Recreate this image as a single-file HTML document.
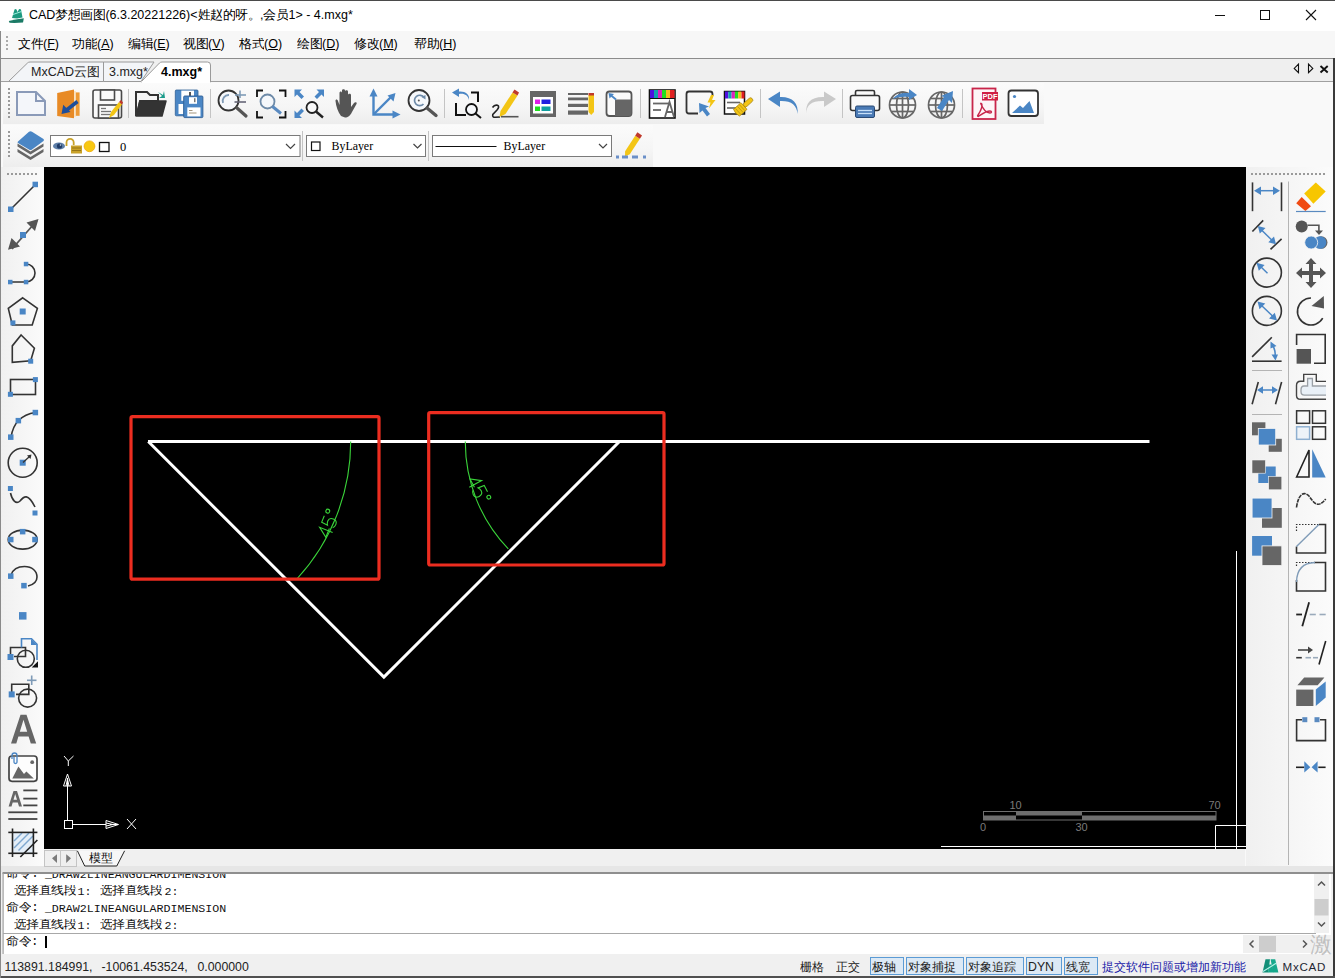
<!DOCTYPE html>
<html><head><meta charset="utf-8">
<style>
*{margin:0;padding:0;box-sizing:border-box}
html,body{width:1335px;height:978px;overflow:hidden;background:#f9f9f9;font-family:"Liberation Sans",sans-serif;color:#000}
.a{position:absolute}
.t{position:absolute;white-space:nowrap;line-height:1}
svg{position:absolute;overflow:visible}
.k{display:inline-block;width:1em;font-style:normal;overflow:hidden;vertical-align:top;text-align:left}
</style></head><body>
<!-- title bar -->
<div class="a" style="left:0;top:0;width:1335px;height:31px;background:#fff"></div>
<div class="t" style="left:29px;top:9px;font-size:12.5px;color:#000">CAD<i class="k">梦</i><i class="k">想</i><i class="k">画</i><i class="k">图</i>(6.3.20221226)&lt;<i class="k">姓</i><i class="k">赵</i><i class="k">的</i><i class="k">呀</i><i class="k">。</i>,<i class="k">会</i><i class="k">员</i>1&gt; - 4.mxg*</div>
<!-- menu bar -->
<div class="a" style="left:0;top:31px;width:1335px;height:27px;background:#f7f7f7"></div>
<div class="t" style="left:18px;top:38px;font-size:12.5px"><i class="k">文</i><i class="k">件</i>(<u>F</u>)</div>
<div class="t" style="left:72px;top:38px;font-size:12.5px"><i class="k">功</i><i class="k">能</i>(<u>A</u>)</div>
<div class="t" style="left:128px;top:38px;font-size:12.5px"><i class="k">编</i><i class="k">辑</i>(<u>E</u>)</div>
<div class="t" style="left:183px;top:38px;font-size:12.5px"><i class="k">视</i><i class="k">图</i>(<u>V</u>)</div>
<div class="t" style="left:239px;top:38px;font-size:12.5px"><i class="k">格</i><i class="k">式</i>(<u>O</u>)</div>
<div class="t" style="left:297px;top:38px;font-size:12.5px"><i class="k">绘</i><i class="k">图</i>(<u>D</u>)</div>
<div class="t" style="left:354px;top:38px;font-size:12.5px"><i class="k">修</i><i class="k">改</i>(<u>M</u>)</div>
<div class="t" style="left:414px;top:38px;font-size:12.5px"><i class="k">帮</i><i class="k">助</i>(<u>H</u>)</div>
<div class="a" style="left:6px;top:36px;width:2px;height:2px;background:#aaa;box-shadow:0 4px 0 #aaa,0 8px 0 #aaa,0 12px 0 #aaa"></div>
<!-- tab bar -->
<div class="a" style="left:0;top:58px;width:1335px;height:24px;background:#efefef;border-top:1px solid #8c8c8c;border-bottom:1px solid #a0a0a0"></div>
<!-- toolbars area -->
<div class="a" style="left:0;top:82px;width:1335px;height:86px;background:#f9f9f9"></div>
<div class="a" style="left:3px;top:83px;width:1041px;height:41px;background:linear-gradient(180deg,#fbfbfb,#f5f5f5 60%,#ededed)"></div>
<div class="a" style="left:3px;top:125px;width:650px;height:42px;background:linear-gradient(180deg,#fbfbfb,#f5f5f5 60%,#ededed)"></div>
<!-- left toolbar -->
<div class="a" style="left:1px;top:167px;width:43px;height:700px;background:linear-gradient(90deg,#f0f0f0,#fbfbfb)"></div>
<!-- canvas -->
<div class="a" style="left:44px;top:167px;width:1202px;height:682px;background:#000"></div>
<!-- right toolbars -->
<div class="a" style="left:1246px;top:167px;width:87px;height:699px;background:linear-gradient(90deg,#f0f0f0,#fbfbfb)"></div>
<!-- model tab row -->
<div class="a" style="left:45px;top:849px;width:1200px;height:19px;background:#efefef"></div>
<!-- command area -->
<div class="a" style="left:0;top:868px;width:1335px;height:86px;background:#f0f0f0"></div>
<div class="a" style="left:3px;top:872px;width:1328px;height:82px;background:#fff;border-top:2px solid #a9a9a9;border-left:1px solid #a0a0a0"></div>
<div class="a" style="left:4px;top:933px;width:1312px;height:1px;background:#a0a0a0"></div>
<!-- status bar -->
<div class="a" style="left:0;top:954px;width:1335px;height:24px;background:#f0f0f0"></div>
<div class="a" style="left:0;top:976px;width:1335px;height:2px;background:#555"></div>
<svg class="a" style="left:0;top:0" width="1335" height="978" viewBox="0 0 1335 978">
<rect x="0" y="0" width="1335" height="1" fill="#4a4a4a"/>
<!-- app icon -->
<path d="M12 18 L14.5 9.5 Q15.5 8.5 16.5 9.5 L17.5 12 L19 9.3 Q20 8.5 21 9.5 L22.5 17.5 L17 18.5 Z" fill="#1d9a80"/>
<path d="M13 14.5 L21.5 11.5" stroke="#9ff0e0" stroke-width="1"/>
<path d="M8.8 21 Q15 19.5 23.8 18.3 L23 22.5 Q16 23.2 9.5 22.8 Z" fill="#1a7a65"/>
<!-- window buttons -->
<line x1="1215" y1="15.5" x2="1225" y2="15.5" stroke="#111" stroke-width="1"/>
<rect x="1260.5" y="10.5" width="9" height="9" fill="none" stroke="#111" stroke-width="1"/>
<path d="M1306 10 L1316 20 M1316 10 L1306 20" stroke="#111" stroke-width="1.1"/>
<!-- tab bar -->
<path d="M8.5 81.5 L27.5 63 Q28.5 62 30 62 H103.5 V81.5 Z" fill="#f3f5f8" stroke="#9a9a9a" stroke-width="1"/>
<path d="M103.5 81.5 V62 H154 L141 81.5 Z" fill="#f3f5f8" stroke="#9a9a9a" stroke-width="1"/>
<path d="M141 82 L159.5 63 Q160.5 62 162 62 H207.5 Q210.5 62 210.5 65 V82 Z" fill="#ffffff" stroke="#9a9a9a" stroke-width="1"/>
<rect x="141.5" y="81" width="68.5" height="2" fill="#fff"/>
<path d="M1298.5 64 V72.7 L1294.2 68.4 Z M1308.5 64 V72.7 L1312.8 68.4 Z" fill="none" stroke="#111" stroke-width="1.1"/>
<path d="M1320.5 66 L1327.7 72.5 M1327.7 66 L1320.5 72.5" stroke="#111" stroke-width="1.9"/>
</svg>
<div class="t" style="left:31px;top:66px;font-size:12.5px;color:#222">MxCAD<i class="k">云</i><i class="k">图</i></div>
<div class="t" style="left:109px;top:66px;font-size:12.5px;color:#222">3.mxg*</div>
<div class="t" style="left:161px;top:66px;font-size:12.5px;font-weight:bold;color:#000">4.mxg*</div>

<svg class="a" style="left:0;top:0" width="1335" height="978" viewBox="0 0 1335 978">
<!-- grips -->
<g fill="#9a9a9a"><rect x="8" y="88" width="2" height="2"/><rect x="8" y="92" width="2" height="2"/><rect x="8" y="96" width="2" height="2"/><rect x="8" y="100" width="2" height="2"/><rect x="8" y="104" width="2" height="2"/><rect x="8" y="108" width="2" height="2"/><rect x="8" y="112" width="2" height="2"/><rect x="8" y="116" width="2" height="2"/>
<rect x="8" y="131" width="2" height="2"/><rect x="8" y="135" width="2" height="2"/><rect x="8" y="139" width="2" height="2"/><rect x="8" y="143" width="2" height="2"/><rect x="8" y="147" width="2" height="2"/><rect x="8" y="151" width="2" height="2"/><rect x="8" y="155" width="2" height="2"/></g>
<!-- separators -->
<g stroke="#c4c4c4" stroke-width="1"><line x1="128.5" y1="89" x2="128.5" y2="118"/><line x1="210.5" y1="89" x2="210.5" y2="118"/><line x1="444.5" y1="89" x2="444.5" y2="118"/><line x1="640.5" y1="89" x2="640.5" y2="118"/><line x1="760.5" y1="89" x2="760.5" y2="118"/><line x1="842.5" y1="89" x2="842.5" y2="118"/><line x1="962.5" y1="89" x2="962.5" y2="118"/><line x1="302.5" y1="131" x2="302.5" y2="161"/><line x1="428.5" y1="131" x2="428.5" y2="161"/></g>
<!-- 1 new -->
<path d="M17 92 H36 L45 101 V115 H17 Z" fill="#f4f6fa" stroke="#8a9ab8" stroke-width="2"/>
<path d="M36 92 V101 H45" fill="none" stroke="#8a9ab8" stroke-width="2"/>
<!-- 2 orange open -->
<path d="M57.2 93 L74 89.4 V118.2 L57.2 116 Z" fill="#e88a25"/>
<rect x="74" y="91" width="1.8" height="26" fill="#fbe2c0"/>
<path d="M75.8 92.4 H79.6 V115.8 H75.8 Z" fill="#ee9a35"/>
<line x1="77.5" y1="101.5" x2="66" y2="110.5" stroke="#1f4e9a" stroke-width="3.6"/>
<path d="M61.5 114 L63.2 104.8 L70.5 112 Z" fill="#1f4e9a"/>
<!-- 3 save -->
<rect x="93" y="90" width="28.5" height="28" rx="2" fill="#fafafa" stroke="#4a4a4a" stroke-width="1.6"/>
<rect x="100.5" y="90" width="14" height="10" fill="#fafafa" stroke="#4a4a4a" stroke-width="1.6"/>
<rect x="98.5" y="105" width="20" height="13" fill="#fafafa" stroke="#4a4a4a" stroke-width="1.6"/>
<g stroke="#777" stroke-width="1.3"><line x1="101" y1="108.5" x2="106" y2="108.5"/><line x1="101" y1="111.5" x2="111" y2="111.5"/><line x1="101" y1="114.5" x2="111" y2="114.5"/></g>
<path d="M109 118 L111 112 L119 102 L122 104.5 L114 115 Z" fill="#f3c515"/>
<path d="M119 102 L121 100 L123 102.5 L122 104.5 Z" fill="#c0392b"/>
<!-- 4 open folder -->
<path d="M136 92 H147 L150 95 H158 V101 H140 L137 115 H136 Z" fill="#f6f6f6" stroke="#333" stroke-width="2"/>
<path d="M136 116 L140 101 H166 L162 116 Z" fill="#333" stroke="#333" stroke-width="1.5" stroke-linejoin="round"/>
<path d="M158 92 L163 95 L164 91 L165 98 L159 98 L162 96 Z" fill="#1a9a8a"/>
<!-- 5 save as -->
<rect x="175.3" y="90" width="22.7" height="25.8" rx="1" fill="#4a86c5" stroke="#2f5f95" stroke-width="0.8"/>
<rect x="181.3" y="90.6" width="12.7" height="10.2" fill="#fff"/><rect x="189" y="92" width="2" height="5" fill="#555"/>
<rect x="178.5" y="104" width="5" height="10" fill="#fff"/>
<rect x="183.7" y="96" width="19.2" height="21.6" rx="1" fill="#4a86c5" stroke="#2f5f95" stroke-width="0.9"/>
<rect x="189" y="97.2" width="8" height="6.6" fill="#fff"/><rect x="194" y="98.2" width="1.5" height="4" fill="#777"/>
<rect x="187.3" y="107.4" width="13.2" height="9" fill="#fff"/>
<g stroke="#9a8a70" stroke-width="0.9"><line x1="189" y1="110.5" x2="192.5" y2="110.5"/><line x1="189" y1="113" x2="196.5" y2="113"/></g>
<!-- 6 zoom+- -->
<circle cx="228.5" cy="100.5" r="10" fill="#f6f8fb" stroke="#333" stroke-width="1.8"/>
<path d="M223 103 A6 6 0 0 1 229 95" fill="none" stroke="#7f9bb7" stroke-width="1.8"/>
<line x1="237" y1="108" x2="246" y2="116" stroke="#555" stroke-width="3.2" stroke-linecap="round"/>
<g stroke="#7f9bb7" stroke-width="1.6"><line x1="240" y1="90.5" x2="240" y2="98"/><line x1="235" y1="95" x2="246" y2="95"/></g>
<line x1="234.5" y1="102" x2="246" y2="102" stroke="#667" stroke-width="1.6"/>
<!-- 7 zoom window -->
<path d="M263 90.5 H257 V97 M279 90.5 H285.5 V97 M257 111 V117.5 H263 M285.5 111 V117.5 H279" fill="none" stroke="#111" stroke-width="1.8"/>
<circle cx="267.5" cy="101.5" r="7" fill="#f4f7fb" stroke="#6d8aa8" stroke-width="1.8"/>
<line x1="272.5" y1="106.5" x2="281" y2="113.5" stroke="#5a8ac0" stroke-width="3"/>
<!-- 8 zoom extents -->
<g fill="#4a86c5"><path d="M294.5 89.5 H302 L299.5 92 L304 96.5 L301.5 99 L297 94.5 L294.5 97 Z"/><path d="M324 89.5 H316.5 L319 92 L314.5 96.5 L317 99 L321.5 94.5 L324 97 Z"/><path d="M294.5 118 H302 L299.5 115.5 L304 111 L301.5 108.5 L297 113 L294.5 110.5 Z"/></g>
<circle cx="312" cy="107.5" r="5.5" fill="#f9f9f9" stroke="#222" stroke-width="1.8"/>
<line x1="316" y1="111.5" x2="323" y2="117.5" stroke="#222" stroke-width="2.4"/>
<!-- 9 hand -->
<path d="M341 116 C338 112 336 106 335.5 101 C335.3 99 337.5 99 338 101 L339.5 105 V93 C339.5 91 342 91 342 93 V102 V90.5 C342 88.8 345 88.8 345 90.5 V102 V91.5 C345 89.8 348 89.8 348 91.5 V103 V95 C348 93.3 351 93.3 351 95 V107 L354 103 C355 101.5 357.5 102 356.5 104 L352 112 C350 116 348 117.5 345 117.5 Z" fill="#555"/>
<!-- 10 axes -->
<g stroke="#4a86c5" stroke-width="2.4" fill="none"><path d="M373.5 96 V114.5 H393"/><line x1="374" y1="114" x2="391" y2="97"/></g>
<g fill="#4a86c5"><path d="M373.5 88.5 L377.5 96.5 H369.5 Z"/><path d="M400.5 114.5 L392.5 118.5 V110.5 Z"/><path d="M395.5 93 L393.5 101.5 L387.5 95.5 Z"/></g>
<!-- 11 zoom realtime -->
<circle cx="419" cy="100.5" r="10.5" fill="#f6f8fb" stroke="#333" stroke-width="1.8"/>
<line x1="427" y1="108" x2="436" y2="115.5" stroke="#555" stroke-width="3.4" stroke-linecap="round"/>
<path d="M423.5 104 A5.2 5.2 0 1 1 424 97.5" fill="none" stroke="#6d8aa8" stroke-width="1.7"/>
<path d="M421.5 97 L425.5 95 L425.5 99.5 Z" fill="#6d8aa8"/>
<circle cx="418.8" cy="100.5" r="1" fill="#555"/>
<!-- 12 zoom previous -->
<path d="M469 100 C468 95 464 93 459 94 V97 L452 92.5 L459 88.5 V91.5 C465 91 470 94 469 100 Z" fill="#4a86c5"/>
<path d="M471 92.5 H478 V102" fill="none" stroke="#111" stroke-width="2"/>
<path d="M456 103 V115 H466" fill="none" stroke="#111" stroke-width="2"/>
<circle cx="471.5" cy="109.5" r="5.5" fill="#f6f8fb" stroke="#111" stroke-width="1.8"/>
<line x1="475.5" y1="113.5" x2="481" y2="118" stroke="#111" stroke-width="2"/>
<!-- 13 pencil z -->
<path d="M492.5 107.5 Q494.5 104.5 497.5 105.3 Q500 106.5 497 110 L492.8 114.5 Q492 117.5 495.5 117.3 L500 117" fill="none" stroke="#222" stroke-width="1.6"/>
<path d="M499.5 117 L500.5 111 L512.5 92.5 L517.5 95.5 L505.5 114 Z" fill="#f3c515"/>
<path d="M512.5 92.5 L514.5 89.5 L519 92.5 L517.5 95.5 Z" fill="#c0392b"/>
<line x1="501" y1="116.7" x2="518.5" y2="116.7" stroke="#555" stroke-width="1.6"/>
<!-- 14 layer table -->
<rect x="530" y="91" width="26" height="26" fill="#666"/>
<rect x="533" y="97" width="20" height="16.5" fill="#fff"/>
<rect x="535" y="99.5" width="5" height="4.5" fill="#e020e8"/><rect x="541.5" y="99.5" width="9" height="4.5" fill="#2020e0"/>
<rect x="535" y="106.5" width="5" height="4.5" fill="#20e020"/><rect x="541.5" y="106.5" width="9" height="4.5" fill="#10a0a0"/>
<!-- 15 linetype -->
<g fill="#666"><rect x="568" y="93" width="20" height="2"/><rect x="568" y="97.5" width="20" height="2.8"/><rect x="568" y="103.8" width="20" height="3.2"/><rect x="568" y="110.5" width="20" height="4.2"/></g>
<path d="M588.5 95 H594 V112 L591.2 115 L588.5 112 Z" fill="#f3c515"/><rect x="588.5" y="93" width="5.5" height="2.5" fill="#c0392b"/>
<!-- 16 box arrow -->
<rect x="606.5" y="91.5" width="25" height="24.5" rx="3" fill="#fbfbfb" stroke="#555" stroke-width="1.8"/>
<path d="M615 99.5 H631.5 V113 A3 3 0 0 1 628.5 116 H615 Z" fill="#666"/>
<line x1="616" y1="99.5" x2="610.5" y2="95" stroke="#4a86c5" stroke-width="1.8"/>
<path d="M608.5 93 L614 94 L609.5 98.5 Z" fill="#4a86c5"/>
<!-- 17 text style -->
<rect x="649.5" y="90" width="25.5" height="28" fill="#fff" stroke="#111" stroke-width="1.6"/>
<g><rect x="650" y="90" width="4" height="8.5" fill="#5010e0"/><rect x="654" y="90" width="4" height="8.5" fill="#10a0b0"/><rect x="658" y="90" width="4" height="8.5" fill="#e020c0"/><rect x="662" y="90" width="4" height="8.5" fill="#20e020"/><rect x="666" y="90" width="4" height="8.5" fill="#f0c020"/><rect x="670" y="90" width="4.5" height="8.5" fill="#e02020"/></g>
<line x1="650" y1="98.5" x2="675" y2="98.5" stroke="#111" stroke-width="1"/>
<g stroke="#666" stroke-width="1.8" fill="none"><line x1="653" y1="103.5" x2="669" y2="103.5"/><line x1="653" y1="110" x2="661" y2="110"/><path d="M665 117 L669.5 102 L674 117 M666.5 112 H672.5"/></g>
<!-- 18 quick select -->
<path d="M698 113.5 H689 A2.5 2.5 0 0 1 686.5 111 V94 A2.5 2.5 0 0 1 689 91.5 H710 A2.5 2.5 0 0 1 712.5 94 V96" fill="none" stroke="#333" stroke-width="1.8"/>
<path d="M699 103 L699.5 113 L702.5 110.5 L707 116.5 L710 114 L705.5 108 L709 106.5 Z" fill="#4a86c5"/>
<path d="M711 95 L714 95 L712 100 L715.5 100 L709 108.5 L710.5 102.5 L707.5 102.5 Z" fill="#f3c515"/>
<!-- 19 match prop -->
<rect x="724.5" y="91.5" width="20" height="22.5" fill="#fff" stroke="#111" stroke-width="1.5"/>
<g><rect x="725" y="91.5" width="3.3" height="7" fill="#5010e0"/><rect x="728.3" y="91.5" width="3.3" height="7" fill="#10a0b0"/><rect x="731.6" y="91.5" width="3.3" height="7" fill="#e020c0"/><rect x="734.9" y="91.5" width="3.3" height="7" fill="#20e020"/><rect x="738.2" y="91.5" width="3.3" height="7" fill="#f0c020"/><rect x="741.5" y="91.5" width="3" height="7" fill="#e02020"/></g>
<g stroke="#666" stroke-width="1.6"><line x1="727" y1="102.5" x2="740" y2="102.5"/><line x1="727" y1="108" x2="736" y2="108"/></g>
<g transform="translate(744 106) rotate(-42)"><path d="M-10 -4.5 H0 V4.5 H-10 Q-12 0 -10 -4.5 Z" fill="#f3c515" stroke="#a88410" stroke-width="0.7"/><g stroke="#a88410" stroke-width="0.6"><line x1="-8" y1="-4" x2="-8" y2="4"/><line x1="-5" y1="-4" x2="-5" y2="4"/><line x1="-2.5" y1="-4" x2="-2.5" y2="4"/></g><rect x="0" y="-2.2" width="11" height="4.4" rx="2" fill="#f3c515" stroke="#a88410" stroke-width="0.7"/></g>

<!-- 20 undo -->
<path d="M797.5 114 C797 105 791 100.5 780 101 V107 L768 99 L780 91.5 V97 C792 96.5 799 103 797.5 114 Z" fill="#4a86c5"/>
<!-- 21 redo -->
<path d="M806.5 113.5 C806 105 812 100.5 824 101 V107 L836 99 L824 91.5 V97 C811 96.5 805 103 806.5 113.5 Z" fill="#c9c9c9"/>
<!-- 22 printer -->
<rect x="855.5" y="90.5" width="19" height="6" rx="1.5" fill="#fafafa" stroke="#333" stroke-width="1.6"/>
<rect x="850.5" y="95.5" width="29" height="15" rx="2" fill="#fafafa" stroke="#333" stroke-width="1.6"/>
<rect x="855.5" y="106" width="19" height="11.5" rx="1.5" fill="#4a7ab5" stroke="#2a4a75" stroke-width="1"/>
<g stroke="#c8e0f8" stroke-width="1.3"><line x1="858" y1="110.5" x2="872" y2="110.5"/><line x1="858" y1="113.5" x2="872" y2="113.5"/></g>
<!-- 23 globe -->
<g fill="none" stroke="#666" stroke-width="1.7"><circle cx="902.5" cy="105" r="13"/><ellipse cx="902.5" cy="105" rx="6" ry="13"/><line x1="902.5" y1="92" x2="902.5" y2="118"/><line x1="889.5" y1="105" x2="915.5" y2="105"/><line x1="891.5" y1="98.5" x2="913.5" y2="98.5"/><line x1="891.5" y1="111.5" x2="913.5" y2="111.5"/></g>
<path d="M893 99 C896 94 902 92.5 909 93 V89 L917 95 L909 100 V97 C903 96.5 897 97 893 99 Z" fill="#4a86c5"/>
<!-- 24 globe2 -->
<g fill="none" stroke="#666" stroke-width="1.7"><circle cx="941.5" cy="105" r="13"/><ellipse cx="941.5" cy="105" rx="6" ry="13"/><line x1="941.5" y1="92" x2="941.5" y2="118"/><line x1="928.5" y1="105" x2="954.5" y2="105"/><line x1="930.5" y1="98.5" x2="952.5" y2="98.5"/><line x1="930.5" y1="111.5" x2="952.5" y2="111.5"/></g>
<path d="M937 108 L944 97 L941 96 L953 91 L952 103 L949 100 L942 111 Z" fill="#4a86c5"/>
<!-- 25 pdf -->
<rect x="972.5" y="88.5" width="23" height="30.5" fill="#fdf5f7" stroke="#c8254a" stroke-width="1.8"/>
<rect x="982" y="92" width="16" height="8.5" fill="#d01f45"/>
<text x="990" y="99.3" font-family="Liberation Sans" font-size="7.5" font-weight="bold" fill="#fff" text-anchor="middle">PDF</text>
<g fill="none" stroke="#c8254a" stroke-width="1.4"><path d="M981 104 C983 109 986 113 990 113 C992 113 992 111 990 111 C986 111 982 114 979 116 C978 117 977 116 978 115 C980 112 982 108 982 105 C982 103 980 103 981 104 Z"/></g>
<!-- 26 image -->
<rect x="1008.5" y="90.5" width="29.5" height="25.5" rx="3" fill="#fff" stroke="#333" stroke-width="1.8"/>
<circle cx="1014.5" cy="96.5" r="1.6" fill="#4a86c5"/>
<path d="M1012 113 L1020 105.5 L1023 108 L1029.5 101 L1034 113 Z" fill="#4a86c5"/>
</svg>

<svg class="a" style="left:0;top:0" width="1335" height="978" viewBox="0 0 1335 978">
<!-- layers icon -->
<path d="M17.5 152 L30.5 160 L43.5 152 L43.5 149 L30.5 157 L17.5 149 Z" fill="#666"/>
<path d="M17.5 146.5 L30.5 154.5 L43.5 146.5 L43.5 143.5 L30.5 151.5 L17.5 143.5 Z" fill="#666"/>
<path d="M18 141.5 L29 131.8 Q30.5 130.8 32 131.8 L43.5 139 Q44.5 140 43.5 141 L32 149.5 Q30.5 150.5 29 149.5 L18 143 Q17 142 18 141.5 Z" fill="#4a86c5"/>
<!-- layer combo -->
<rect x="50.5" y="135.5" width="249.5" height="21" fill="#fff" stroke="#7a7a7a" stroke-width="1"/>
<ellipse cx="59" cy="146" rx="6" ry="3.6" fill="#5d7ea8"/><ellipse cx="59.5" cy="146" rx="2.6" ry="2.6" fill="#1e3a66"/><circle cx="60.5" cy="145" r="0.8" fill="#cde"/>
<path d="M66.5 146 V142.5 A3.6 3.6 0 0 1 73.7 142.5 V145" fill="none" stroke="#c9a22a" stroke-width="1.8"/>
<rect x="71" y="145.5" width="11" height="8" fill="#c9a22a"/><g stroke="#8a6a10" stroke-width="0.8"><line x1="72" y1="148" x2="81" y2="148"/><line x1="72" y1="150.5" x2="81" y2="150.5"/></g>
<circle cx="89.5" cy="146.3" r="5.4" fill="#f8c812" stroke="#f0a800" stroke-width="0.8"/>
<rect x="99.5" y="142.5" width="9.5" height="9" fill="#fff" stroke="#111" stroke-width="1.3"/>
<path d="M286 144 L290.5 148.5 L295 144" fill="none" stroke="#444" stroke-width="1.2"/>
<!-- color combo -->
<rect x="306.5" y="135.5" width="119" height="21" fill="#fff" stroke="#7a7a7a" stroke-width="1"/>
<rect x="311.5" y="142" width="8.5" height="8.5" fill="#fff" stroke="#111" stroke-width="1.2"/>
<path d="M413.5 144 L417.5 148 L421.5 144" fill="none" stroke="#444" stroke-width="1.2"/>
<!-- linetype combo -->
<rect x="432.5" y="135.5" width="179" height="21" fill="#fff" stroke="#7a7a7a" stroke-width="1"/>
<line x1="435.5" y1="146.5" x2="496.5" y2="146.5" stroke="#111" stroke-width="1"/>
<path d="M599 144 L603 148 L607 144" fill="none" stroke="#444" stroke-width="1.2"/>
<!-- pencil dotted -->
<g transform="translate(625 156.5) rotate(-57)"><path d="M0 0 L4.5 -2.8 H23 V2.8 H4.5 Z" fill="#f3c515"/><rect x="23" y="-2.8" width="4" height="5.6" fill="#c0392b"/></g>
<g fill="#6a8fc8"><rect x="616" y="155.5" width="3" height="3"/><rect x="622" y="155.5" width="6" height="3"/><rect x="632" y="155.5" width="6" height="3"/><rect x="643" y="155.5" width="3" height="3"/></g>
</svg>
<div class="t" style="left:120px;top:141px;font-family:'Liberation Serif',serif;font-size:12.5px">0</div>
<div class="t" style="left:331.5px;top:140.5px;font-family:'Liberation Serif',serif;font-size:11.9px;">ByLayer</div>
<div class="t" style="left:503.5px;top:140.5px;font-family:'Liberation Serif',serif;font-size:11.9px;">ByLayer</div>

<svg class="a" style="left:0;top:0" width="1335" height="978" viewBox="0 0 1335 978">
<g fill="#9a9a9a"><rect x="7" y="173" width="2" height="2"/><rect x="11" y="173" width="2" height="2"/><rect x="15" y="173" width="2" height="2"/><rect x="19" y="173" width="2" height="2"/><rect x="23" y="173" width="2" height="2"/><rect x="27" y="173" width="2" height="2"/><rect x="31" y="173" width="2" height="2"/><rect x="35" y="173" width="2" height="2"/>
<rect x="1251" y="173" width="2" height="2"/><rect x="1255" y="173" width="2" height="2"/><rect x="1259" y="173" width="2" height="2"/><rect x="1263" y="173" width="2" height="2"/><rect x="1267" y="173" width="2" height="2"/><rect x="1271" y="173" width="2" height="2"/><rect x="1275" y="173" width="2" height="2"/><rect x="1279" y="173" width="2" height="2"/><rect x="1283" y="173" width="2" height="2"/><rect x="1287" y="173" width="2" height="2"/><rect x="1291" y="173" width="2" height="2"/><rect x="1295" y="173" width="2" height="2"/><rect x="1299" y="173" width="2" height="2"/><rect x="1303" y="173" width="2" height="2"/><rect x="1307" y="173" width="2" height="2"/><rect x="1311" y="173" width="2" height="2"/><rect x="1315" y="173" width="2" height="2"/><rect x="1319" y="173" width="2" height="2"/><rect x="1323" y="173" width="2" height="2"/></g>
<g fill="none" stroke="#333" stroke-width="1.6">
<!-- line --><line x1="12" y1="208" x2="34" y2="186"/>
<!-- arc polyline --><path d="M11 282 H26 M26 264 A9 9 0 0 1 26 282"/>
<!-- pentagon --><path d="M22.7 297.8 L37.4 308.4 L32.2 325 H12.3 L8.3 308.4 Z"/>
<!-- polygon --><path d="M21.1 335 L34.4 348.3 L30.7 360.8 L12.3 362.4 V345.9 Z"/>
<!-- rect --><rect x="10.5" y="379.5" width="25" height="15"/>
<!-- 3pt arc --><path d="M11 437 Q13 426 18.5 420.5 Q25 414 35.5 412.5"/>
<!-- circle --><circle cx="22.7" cy="462.7" r="14.5"/>
<!-- spline --><path d="M10.5 493 C12 500 16 505 20 501 C24 496 28 493 35 507"/>
<!-- ellipse --><ellipse cx="22.7" cy="539.6" rx="14.5" ry="9.5"/>
<!-- ell arc --><path d="M11 575 C13 569 18 566.5 24.5 566.5 C32 566.5 37 571 37 577 C37 581 34 584.5 28 586"/>
<!-- insert block --><path d="M10.5 656.5 V647.5 H25.5 V656.5 H14"/><circle cx="25.8" cy="658.8" r="8.5"/>
<!-- create block --><path d="M11.7 694.4 V684.3 H28.8 V694.4 H16"/><circle cx="27.6" cy="698.1" r="9"/>
</g>
<line x1="12" y1="249" x2="37" y2="220.5" stroke="#555" stroke-width="1.8"/>
<path d="M38.5 219 L35 231 L26.5 222.5 Z M8 249.8 L11.5 238 L20 246.5 Z" fill="#555"/>
<g fill="#4a86c5">
<rect x="32.5" y="181.7" width="5.5" height="5.5"/><rect x="8" y="206.5" width="5.5" height="5.5"/>
<rect x="20" y="232" width="6" height="6"/>
<rect x="8" y="279.8" width="4.5" height="4.5"/><rect x="23.8" y="279.8" width="4.5" height="4.5"/><rect x="23.8" y="261.8" width="4.5" height="4.5"/>
<rect x="19.7" y="308.5" width="6" height="6"/><rect x="10.4" y="320.4" width="5" height="5"/>
<rect x="28.2" y="358.7" width="5" height="5"/>
<rect x="32.9" y="377.1" width="5" height="5"/><rect x="7.9" y="391.8" width="5" height="5"/>
<rect x="32.6" y="409.8" width="5.5" height="5.5"/><rect x="15.6" y="417.9" width="5.5" height="5.5"/><rect x="8" y="434.4" width="5.5" height="5.5"/>
<rect x="19.7" y="459.7" width="6" height="6"/>
<rect x="7.9" y="486" width="5" height="5"/><rect x="32.5" y="510.5" width="5" height="5"/>
<rect x="8" y="536.8" width="5.5" height="5.5"/><rect x="19.9" y="528.9" width="5.5" height="5.5"/><rect x="32.2" y="536.8" width="5.5" height="5.5"/>
<rect x="8" y="573.4" width="5.5" height="5.5"/><rect x="21.2" y="582.9" width="5.5" height="5.5"/>
<rect x="19" y="612.1" width="7.5" height="7.5"/>
<rect x="7.5" y="654" width="6" height="6"/>
<rect x="8.7" y="691.4" width="6" height="6"/>
</g>
<line x1="23" y1="462.5" x2="29.5" y2="456.5" stroke="#333" stroke-width="1.3"/><path d="M31.5 454.5 L30.5 459 L27 455.5 Z" fill="#333"/>
<!-- insert block doc -->
<path d="M21.5 647.5 V638.8 H31.5 L37 644.3 V660" fill="none" stroke="#4a86c5" stroke-width="1.6"/>
<path d="M31 639 L37 645 H31 Z" fill="#4a86c5"/>
<path d="M31.7 667.4 L38 661.3 V667.4 Z" fill="#111"/>
<g stroke="#7f9bb7" stroke-width="1.6"><line x1="31.7" y1="675.5" x2="31.7" y2="685"/><line x1="27" y1="680.3" x2="36.5" y2="680.3"/></g>
<!-- A -->
<path d="M11 743.5 L20.5 714.7 H26.5 L36.2 743.5 H30.8 L28.6 736.5 H18.4 L16.3 743.5 Z M19.8 731.8 H27.2 L23.5 719.8 Z" fill="#666"/>
<!-- image -->
<rect x="9" y="756" width="28" height="25.3" rx="3" fill="#fdfdfd" stroke="#444" stroke-width="1.7"/>
<path d="M12.3 778.4 L18.4 766.5 L24 774 L26.4 771.5 L33.8 778.4 Z" fill="#666"/>
<circle cx="32.2" cy="762.2" r="1.9" fill="#666"/>
<path d="M12 759 V755.5 A2.5 2.5 0 0 1 17 755.5 V762 A1.5 1.5 0 0 1 14 762 V757" fill="none" stroke="#4a86c5" stroke-width="1.3"/>
<!-- mtext -->
<path d="M8.6 806.4 L13.5 791 H17 L22 806.4 H19 L17.8 802.5 H12.7 L11.5 806.4 Z M13.5 799.8 H17 L15.2 794 Z" fill="#666"/>
<g stroke="#444" stroke-width="1.8"><line x1="23.3" y1="790.4" x2="37.4" y2="790.4"/><line x1="23.3" y1="798.6" x2="37.4" y2="798.6"/><line x1="23.3" y1="805.4" x2="37.4" y2="805.4"/><line x1="8.3" y1="812.3" x2="37.4" y2="812.3"/><line x1="8.3" y1="819" x2="37.4" y2="819"/></g>
<!-- hatch -->
<rect x="12.5" y="832.4" width="21" height="21" fill="#e4eef8"/>
<g stroke="#7fa8d0" stroke-width="1.5"><line x1="14" y1="841" x2="22" y2="833"/><line x1="14" y1="848" x2="29" y2="833"/><line x1="18.5" y1="850.5" x2="33" y2="836"/></g>
<g stroke="#222" stroke-width="1.6"><line x1="8.3" y1="832.4" x2="37.4" y2="832.4"/><line x1="8.3" y1="853.3" x2="37.4" y2="853.3"/><line x1="12.5" y1="828.5" x2="12.5" y2="857"/><line x1="33.4" y1="828.5" x2="33.4" y2="857"/><line x1="20.3" y1="857" x2="37.4" y2="840"/></g>
</svg>

<svg class="a" style="left:0;top:0" width="1335" height="978" viewBox="0 0 1335 978">
<line x1="1288.5" y1="181.5" x2="1288.5" y2="865" stroke="#b4b4b4" stroke-width="1"/>
<g stroke="#b4b4b4" stroke-width="1"><line x1="1252" y1="370.5" x2="1282" y2="370.5"/><line x1="1252" y1="414.5" x2="1282" y2="414.5"/></g>
<!-- col1 -->
<g fill="none" stroke="#333" stroke-width="1.6">
<line x1="1252.5" y1="182.4" x2="1252.5" y2="211.2"/><line x1="1281.5" y1="182.4" x2="1281.5" y2="211.2"/>
<line x1="1252.4" y1="231.5" x2="1263.2" y2="220.4"/><line x1="1270.5" y1="249.3" x2="1281.6" y2="238.8"/>
<circle cx="1266.9" cy="272.6" r="14.5"/>
<circle cx="1266.9" cy="310.9" r="14.5"/>
<line x1="1252.1" y1="356.9" x2="1271.8" y2="337.3"/><line x1="1252" y1="361.2" x2="1281.6" y2="361.2"/>
<line x1="1252.1" y1="404.2" x2="1258.3" y2="382"/><line x1="1275.5" y1="404.2" x2="1281.6" y2="382"/>
</g>
<g stroke="#4a86c5" stroke-width="1.5" fill="none">
<line x1="1258" y1="190.7" x2="1276" y2="190.7"/>
<line x1="1261" y1="229.5" x2="1272.5" y2="240.8"/>
<line x1="1267.5" y1="273.2" x2="1260" y2="266"/>
<line x1="1261" y1="305" x2="1273.5" y2="317"/>
<path d="M1272.5 345 Q1276 351 1275 357"/>
<line x1="1261" y1="390" x2="1273" y2="390"/>
</g>
<g fill="#4a86c5">
<path d="M1254 190.7 L1261 186.5 V195 Z M1280 190.7 L1273 186.5 V195 Z"/>
<path d="M1257.8 226 L1265.5 228 L1259.8 233.6 Z M1276 244.2 L1268.3 242.3 L1274 236.6 Z"/>
<path d="M1256.5 262.8 L1264.6 265 L1258.8 270.8 Z"/>
<path d="M1257.5 301.5 L1265.3 303.5 L1259.5 309.3 Z M1277 320.5 L1269 318.5 L1274.8 312.7 Z"/>
<path d="M1270.5 341.5 L1276.5 346 L1270.5 348.5 Z M1275.5 360.5 L1271.5 354.5 L1278 354.5 Z"/>
<path d="M1257 390 L1263 386.2 V393.8 Z M1278 390 L1272 386.2 V393.8 Z"/>
</g>
<!-- draworder -->
<rect x="1252" y="422.3" width="13.4" height="13" fill="#666"/>
<rect x="1268.7" y="438.8" width="13.1" height="13" fill="#666"/>
<rect x="1258.3" y="428.4" width="17.4" height="16.6" fill="#4a86c5" stroke="#f4f4f4" stroke-width="0.8"/>
<rect x="1258.3" y="466.5" width="17.4" height="16.5" fill="#4a86c5"/>
<rect x="1252" y="460" width="13.4" height="13.2" fill="#666" stroke="#f4f4f4" stroke-width="0.6"/>
<rect x="1268.7" y="476.5" width="13.1" height="13.3" fill="#666" stroke="#f4f4f4" stroke-width="0.6"/>
<rect x="1262" y="508" width="19.8" height="19.8" fill="#666"/>
<rect x="1252.1" y="498.1" width="19.9" height="19.9" fill="#4a86c5" stroke="#f4f4f4" stroke-width="0.8"/>
<rect x="1252.1" y="536" width="19.9" height="19.7" fill="#4a86c5"/>
<rect x="1262" y="545.9" width="19.8" height="19.6" fill="#666" stroke="#f4f4f4" stroke-width="0.8"/>
<!-- col2 -->
<path d="M1304.2 193.4 L1315.8 182.4 L1325.7 191.6 L1313.4 203.8 Z" fill="#f7c600"/>
<path d="M1296.2 203.2 L1301.7 197.1 L1311 206.3 L1305.4 211 Z" fill="#f04a12"/>
<line x1="1296" y1="211.5" x2="1325.7" y2="211.5" stroke="#5a8ac0" stroke-width="1.2"/>
<circle cx="1301.7" cy="226.6" r="6" fill="#555"/>
<path d="M1307.5 225.3 H1318.9 V231" fill="none" stroke="#555" stroke-width="1.6"/>
<path d="M1315 230.5 H1323 L1319 235 Z" fill="#555"/>
<circle cx="1321.2" cy="242.5" r="6.3" fill="#666"/>
<circle cx="1320" cy="242.5" r="6.3" fill="#4a86c5"/>
<circle cx="1311.2" cy="242.5" r="6.5" fill="#4a86c5" stroke="#f4f4f4" stroke-width="0.8"/>
<path d="M1311 258 L1316.5 264 H1313 V271 H1320 V267.5 L1326 273 L1320 278.5 V275 H1313 V282 H1316.5 L1311 288 L1305.5 282 H1309 V275 H1302 V278.5 L1296 273 L1302 267.5 V271 H1309 V264 H1305.5 Z" fill="#555"/>
<path d="M1311 298 A13.5 13.5 0 1 0 1322.7 318.2" fill="none" stroke="#333" stroke-width="1.6"/>
<path d="M1311.5 306 L1323.8 296 L1324 308.4 Z" fill="#555"/>
<path d="M1296.6 345 V334.5 H1325.2 V363.2 H1314" fill="none" stroke="#333" stroke-width="1.6"/>
<rect x="1296.6" y="349" width="14.4" height="14.7" fill="#555"/>
<path d="M1304 386.5 H1307.6 V378.5 H1312.4 V386.5 H1326 V395.2 H1304.5 Q1301 395.2 1301 391.5 V390 Q1301 386.5 1304 386.5 Z" fill="#e9f0f7"/>
<path d="M1326 386 H1312.4 V378.5 H1307.6 V386 H1304 Q1301 386 1301 390 V391.5 Q1301 395.2 1304.5 395.2 H1326" fill="none" stroke="#9aa0a6" stroke-width="1.3"/>
<path d="M1326 381.4 H1316.3 V374.4 H1303.7 V381.2 H1300.5 Q1296.5 381.2 1296.5 385.5 V395.5 Q1296.5 399.3 1300.5 399.3 H1326" fill="none" stroke="#444" stroke-width="1.4"/>
<g fill="none" stroke="#333" stroke-width="1.5"><rect x="1296.6" y="410.8" width="13" height="12.5"/><rect x="1312.5" y="410.8" width="13" height="12.5"/><rect x="1312.5" y="426.8" width="13" height="12.5"/></g>
<rect x="1296.6" y="426.8" width="13" height="12.5" fill="#eef3f8" stroke="#8fb0d0" stroke-width="1.5"/>
<path d="M1296.6 477 L1309 450 V477 Z" fill="none" stroke="#222" stroke-width="1.6"/>
<path d="M1312.2 449.2 V477.4 H1325.7 Z" fill="#4a86c5"/>
<path d="M1296.5 507.5 C1298 496 1303 490 1309 496 C1314 503 1318 509 1325.7 498.9" fill="none" stroke="#333" stroke-width="1.6" stroke-dasharray="4 0.8"/>
<path d="M1296.5 531 V524.5 H1318.9" fill="none" stroke="#333" stroke-width="1.2" stroke-dasharray="1.5 1.5"/>
<path d="M1318.9 524.5 H1325.5 V553 H1296.5 V546.4" fill="none" stroke="#333" stroke-width="1.6"/>
<path d="M1296.5 546.4 L1318.9 524.5" fill="none" stroke="#7f9bb7" stroke-width="1.4"/>
<path d="M1296.5 566 V562.5 H1314" fill="none" stroke="#333" stroke-width="1.2" stroke-dasharray="1.5 1.5"/>
<path d="M1314 562.5 H1325.5 V591 H1296.5 V580" fill="none" stroke="#333" stroke-width="1.6"/>
<path d="M1296.5 582 Q1297 563 1315 562.5" fill="none" stroke="#7f9bb7" stroke-width="1.4"/>
<line x1="1302.3" y1="626.2" x2="1309.1" y2="602.2" stroke="#222" stroke-width="1.8"/>
<line x1="1296.2" y1="614.5" x2="1302" y2="614.5" stroke="#222" stroke-width="1.8"/>
<g stroke="#9aaabb" stroke-width="1.6"><line x1="1309.7" y1="614.5" x2="1315.8" y2="614.5"/><line x1="1319.5" y1="614.5" x2="1325.7" y2="614.5"/></g>
<line x1="1298" y1="650" x2="1310" y2="650" stroke="#444" stroke-width="1.6"/><path d="M1313 650 L1308 646.5 V653.5 Z" fill="#444"/>
<line x1="1296.2" y1="657.7" x2="1301.8" y2="657.7" stroke="#333" stroke-width="1.6"/>
<g stroke="#9aaabb" stroke-width="1.6"><line x1="1305.5" y1="657.7" x2="1311" y2="657.7"/><line x1="1313" y1="657.7" x2="1318" y2="657.7"/></g>
<line x1="1319" y1="664.5" x2="1325.7" y2="641" stroke="#222" stroke-width="1.6"/>
<path d="M1297.4 685.3 L1304.2 677.4 H1324.4 L1317.7 685.3 Z" fill="#666"/>
<rect x="1296.2" y="689.6" width="17.2" height="16.4" fill="#666"/>
<path d="M1315.8 689.6 L1325.7 681.6 V697.6 L1315.8 706 Z" fill="#4a86c5"/>
<path d="M1302 719.7 H1296.6 V740.6 H1325.5 V719.7 H1320" fill="none" stroke="#333" stroke-width="1.6"/>
<rect x="1302.3" y="717.2" width="5" height="5" fill="#5a8ac0"/><rect x="1314.5" y="717.2" width="5" height="5" fill="#5a8ac0"/>
<g stroke="#222" stroke-width="1.6"><line x1="1296" y1="767.3" x2="1304.3" y2="767.3"/><line x1="1318.3" y1="767.3" x2="1325.6" y2="767.3"/></g>
<path d="M1304.3 761.3 V772.6 L1310.3 767.3 Z M1317.6 761.3 V772.6 L1311.6 767.3 Z" fill="#4a86c5"/>
<rect x="1333" y="58" width="2" height="920" fill="#3a3a3a"/>
</svg>

<svg class="a" style="left:0;top:0" width="1335" height="978" viewBox="0 0 1335 978">
<defs><clipPath id="cv"><rect x="44" y="167" width="1202" height="682"/></clipPath></defs>
<g clip-path="url(#cv)">
<g stroke="#fff" stroke-width="3" fill="none" stroke-linejoin="miter">
<line x1="148" y1="441.5" x2="1149.5" y2="441.5"/>
<path d="M148.3 441.5 L383.9 677.1 L619.5 441.5"/>
</g>
<g stroke="#3ad43a" stroke-width="1.1" fill="none">
<path d="M350.7 441.5 A202.4 202.4 0 0 1 296.8 579"/>
<path d="M465.3 441.5 A154.2 154.2 0 0 0 508.3 548.9"/>
</g>
<g fill="none" stroke="#3ad43a" stroke-width="1.1" transform="translate(330 539) rotate(-68)"><path d="M7 0 V-14 L0 -4.5 H9.5 M19.5 -14 H12.5 L11.8 -7.5 Q13.5 -8.8 15.8 -8.8 Q19.8 -8.8 19.8 -4.4 Q19.8 0 15.5 0 Q12.8 0 11.5 -1.8"/><circle cx="25" cy="-12.5" r="1.9"/></g>
<g fill="none" stroke="#3ad43a" stroke-width="1.1" transform="translate(466 481) rotate(62)"><path d="M7 0 V-14 L0 -4.5 H9.5 M19.5 -14 H12.5 L11.8 -7.5 Q13.5 -8.8 15.8 -8.8 Q19.8 -8.8 19.8 -4.4 Q19.8 0 15.5 0 Q12.8 0 11.5 -1.8"/><circle cx="25" cy="-12.5" r="1.9"/></g>
<g stroke="#ec2d20" stroke-width="3.2" fill="none">
<rect x="131" y="416.7" width="248" height="162.5" rx="1.5"/>
<rect x="428.7" y="412.6" width="235.3" height="152.4" rx="1.5"/>
</g>
<!-- UCS -->
<g stroke="#fff" stroke-width="1" fill="none">
<rect x="64.5" y="820.5" width="8" height="8"/>
<line x1="67.5" y1="820.5" x2="67.5" y2="786"/>
<line x1="72.5" y1="824.5" x2="106" y2="824.5"/>
<path d="M67.5 774 L63.5 786 H71.5 Z M67.5 778 V786 M66 786 L67.5 779 L69 786"/>
<path d="M118.5 824.5 L106 820.5 V828.5 Z M110 824.5 H118 M106 823 L113 824.5 L106 826"/>
<path d="M64 756 L68.3 761 L73.5 756 M68.3 761 V766"/>
<path d="M127 819 L136 829 M136 819 L127 829"/>
</g>
<!-- scale bar -->
<g fill="#6e6e6e">
<rect x="1016" y="811" width="66" height="4.5"/>
<rect x="983" y="815.5" width="33" height="4.5"/>
<rect x="1082" y="815.5" width="134" height="4.5"/>
</g>
<rect x="983.5" y="811.5" width="232.5" height="8.5" fill="none" stroke="#6e6e6e" stroke-width="1"/>
<g font-family="Liberation Sans" font-size="11" fill="#7a7a7a">
<text x="1009.5" y="808.5">10</text><text x="1208.5" y="808.5">70</text>
<text x="980" y="830.5">0</text><text x="1075.5" y="830.5">30</text>
</g>
<!-- cursor lines -->
<g stroke="#fff" stroke-width="1" fill="none">
<line x1="1236.5" y1="551" x2="1236.5" y2="849"/>
<line x1="941" y1="846.5" x2="1246" y2="846.5"/>
<path d="M1215.5 849 V825.5 H1246"/>
</g>
</g>
</svg>

<svg class="a" style="left:0;top:0" width="1335" height="978" viewBox="0 0 1335 978">
<!-- model row -->
<rect x="44" y="849" width="1201" height="17.5" fill="#f0f0f0"/>
<rect x="0" y="866" width="1333" height="6" fill="#e6e6e6"/>
<rect x="44.5" y="850.5" width="32" height="16" fill="#efefef" stroke="#c4c4c4" stroke-width="1"/>
<line x1="60.5" y1="850.5" x2="60.5" y2="866.5" stroke="#c4c4c4" stroke-width="1"/>
<path d="M52 858.3 L57 854.2 V863 Z" fill="#7a7a7a"/>
<path d="M71 858.3 L66.2 854.2 V863 Z" fill="#7a7a7a"/>
<path d="M77.4 850.8 L84.7 866 H116.8 L124.6 850.8" fill="#f7f7f7" stroke="#222" stroke-width="1"/>
<!-- command area -->
<rect x="2.5" y="872" width="1330.5" height="2" fill="#8f8f8f"/>
<rect x="3" y="874" width="1327" height="80" fill="#fff"/>
<rect x="2.5" y="873" width="1.2" height="81" fill="#a0a0a0"/>
<line x1="3" y1="933.5" x2="1316" y2="933.5" stroke="#a8a8a8" stroke-width="1"/>
<!-- v scrollbar -->
<rect x="1314" y="874" width="15" height="59" fill="#f0f0f0"/>
<rect x="1314.5" y="899" width="14" height="16.5" fill="#cdcdcd"/>
<path d="M1318 885.5 L1321.5 882 L1325 885.5" fill="none" stroke="#555" stroke-width="1.5"/>
<path d="M1318 922.5 L1321.5 926 L1325 922.5" fill="none" stroke="#555" stroke-width="1.5"/>
<!-- h scrollbar -->
<rect x="1243" y="935" width="88" height="18" fill="#f0f0f0"/>
<rect x="1259" y="936" width="17" height="16" fill="#cdcdcd"/>
<path d="M1253.5 940.5 L1250 944 L1253.5 947.5" fill="none" stroke="#555" stroke-width="1.5"/>
<path d="M1303 940.5 L1306.5 944 L1303 947.5" fill="none" stroke="#555" stroke-width="1.5"/>
<!-- cursor -->
<rect x="45" y="936" width="2" height="12" fill="#000"/>
<!-- status bar -->
<rect x="0" y="954" width="1333" height="22" fill="#f0f0f0"/>
<g fill="#dce9f5" stroke="#5b9bd5" stroke-width="1">
<rect x="870.5" y="957.5" width="33" height="17"/>
<rect x="906.5" y="957.5" width="57" height="17"/>
<rect x="966.5" y="957.5" width="57" height="17"/>
<rect x="1026.5" y="957.5" width="35" height="17"/>
<rect x="1064.5" y="957.5" width="33" height="17"/>
</g>
<rect x="0" y="976" width="1335" height="2" fill="#505050"/>
<rect x="0" y="31" width="1" height="947" fill="#8a8a8a"/>
<!-- mxcad logo -->
<path d="M1265.5 959.2 H1270 L1268.2 972.5 H1262.5 Z" fill="#138f78"/>
<path d="M1270.6 959.2 H1275.2 L1278.4 972.5 H1273.2 Z" fill="#17a88c"/>
<path d="M1269 964.5 H1272.3 L1273.5 972.5 H1268 Z" fill="#17a88c"/>
<line x1="1263" y1="971.5" x2="1276.5" y2="963" stroke="#b8f4ea" stroke-width="1.1"/>
</svg>
<div class="t" style="left:89px;top:852px;font-size:12px;color:#111"><i class="k">模</i><i class="k">型</i></div>
<div class="a" style="left:4px;top:874px;width:1309px;height:59px;overflow:hidden;font-family:'Liberation Mono',monospace;color:#111">
<div class="t" style="left:2.3px;top:-6.0px;font-size:12.5px"><i class="k">命</i><i class="k">令</i>:</div>
<div class="t" style="left:40.9px;top:-5.0px;font-size:11.63px">_DRAW2LINEANGULARDIMENSION</div>
<div class="t" style="left:9.5px;top:11.0px;font-size:12.5px"><i class="k">选</i><i class="k">择</i><i class="k">直</i><i class="k">线</i><i class="k">段</i></div>
<div class="t" style="left:73.5px;top:12px;font-size:11.63px">1:</div>
<div class="t" style="left:95.5px;top:11.0px;font-size:12.5px"><i class="k">选</i><i class="k">择</i><i class="k">直</i><i class="k">线</i><i class="k">段</i></div>
<div class="t" style="left:160.5px;top:12px;font-size:11.63px">2:</div>
<div class="t" style="left:2.3px;top:28.0px;font-size:12.5px"><i class="k">命</i><i class="k">令</i>:</div>
<div class="t" style="left:40.9px;top:29.0px;font-size:11.63px">_DRAW2LINEANGULARDIMENSION</div>
<div class="t" style="left:9.5px;top:45.0px;font-size:12.5px"><i class="k">选</i><i class="k">择</i><i class="k">直</i><i class="k">线</i><i class="k">段</i></div>
<div class="t" style="left:73.5px;top:46px;font-size:11.63px">1:</div>
<div class="t" style="left:95.5px;top:45.0px;font-size:12.5px"><i class="k">选</i><i class="k">择</i><i class="k">直</i><i class="k">线</i><i class="k">段</i></div>
<div class="t" style="left:160.5px;top:46px;font-size:11.63px">2:</div>
</div>
<div class="t" style="left:6px;top:936px;font-family:'Liberation Mono',monospace;font-size:12.5px;color:#111"><i class="k">命</i><i class="k">令</i>:</div>
<div class="t" style="left:4.5px;top:961px;font-size:12.3px;color:#222">113891.184991,</div><div class="t" style="left:101.5px;top:961px;font-size:12.3px;color:#222">-10061.453524,</div><div class="t" style="left:197.5px;top:961px;font-size:12.3px;color:#222">0.000000</div>
<div class="t" style="left:800px;top:961px;font-size:12px;color:#222"><i class="k">栅</i><i class="k">格</i></div>
<div class="t" style="left:836px;top:961px;font-size:12px;color:#222"><i class="k">正</i><i class="k">交</i></div>
<div class="t" style="left:872px;top:961px;font-size:12px;color:#222"><i class="k">极</i><i class="k">轴</i></div>
<div class="t" style="left:908px;top:961px;font-size:12px;color:#222"><i class="k">对</i><i class="k">象</i><i class="k">捕</i><i class="k">捉</i></div>
<div class="t" style="left:968px;top:961px;font-size:12px;color:#222"><i class="k">对</i><i class="k">象</i><i class="k">追</i><i class="k">踪</i></div>
<div class="t" style="left:1028px;top:961px;font-size:12.3px;color:#222">DYN</div>
<div class="t" style="left:1066px;top:961px;font-size:12px;color:#222"><i class="k">线</i><i class="k">宽</i></div>
<div class="t" style="left:1102px;top:961px;font-size:12px;color:#1a1aa8"><i class="k">提</i><i class="k">交</i><i class="k">软</i><i class="k">件</i><i class="k">问</i><i class="k">题</i><i class="k">或</i><i class="k">增</i><i class="k">加</i><i class="k">新</i><i class="k">功</i><i class="k">能</i></div>
<div class="t" style="left:1282.5px;top:961px;font-size:11.6px;letter-spacing:0.75px;color:#1e2633">MxCAD</div>
<div class="t" style="left:1310px;top:934px;font-size:22px;color:rgba(150,150,150,0.55)"><i class="k">激</i></div>


</body></html>
